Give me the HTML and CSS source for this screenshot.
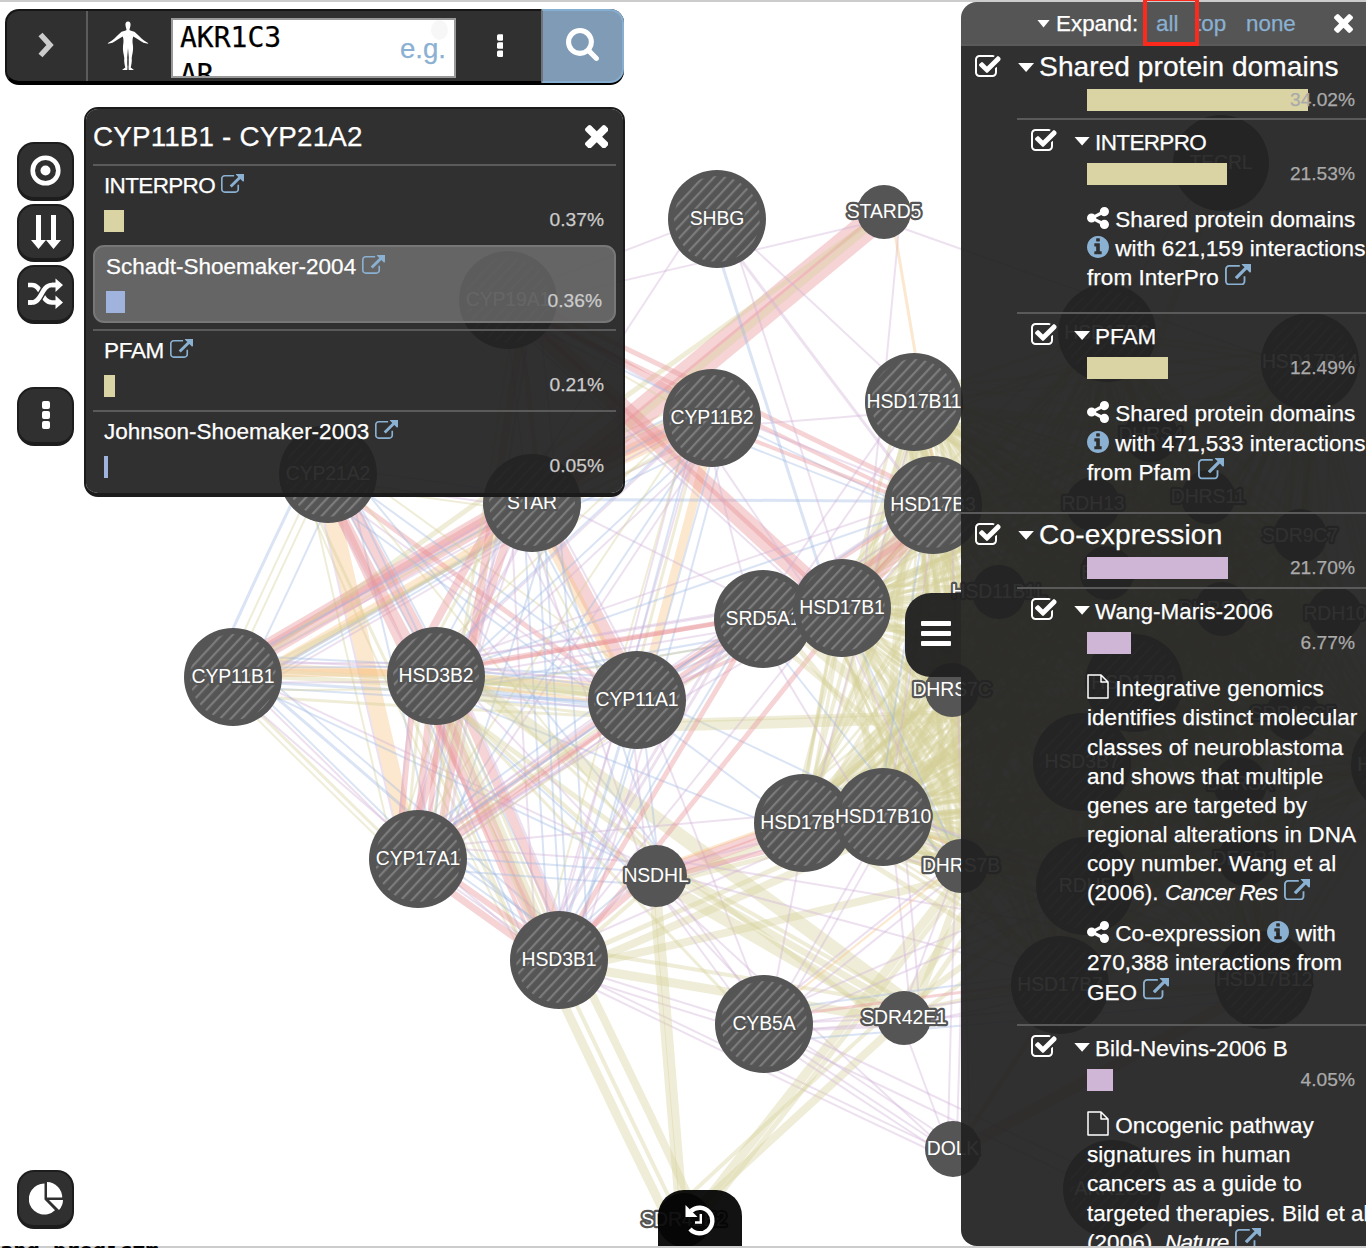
FILE: index.html
```html
<!DOCTYPE html>
<html lang="en">
<head>
<meta charset="utf-8">
<title>Gene network</title>
<link rel="stylesheet" href="styles.css">
</head>
<body>
<svg class="defs" width="0" height="0" aria-hidden="true">
  <symbol id="check" viewBox="64 128 1640 1408"><path d="M1472 930v318q0 119-84.500 203.500t-203.500 84.500h-832q-119 0-203.500-84.500t-84.500-203.500v-832q0-119 84.500-203.500t203.500-84.500h832q63 0 117 25 15 7 18 23 3 17-9 29l-49 49q-10 10-23 10-3 0-9-2-23-6-45-6h-832q-66 0-113 47t-47 113v832q0 66 47 113t113 47h832q66 0 113-47t47-113v-254q0-13 9-22l64-64q10-10 23-10 6 0 12 3 20 8 20 29zm231-489l-814 814q-24 24-57 24t-57-24l-430-430q-24-24-24-57t24-57l110-110q24-24 57-24t57 24l263 263 647-647q24-24 57-24t57 24l110 110q24 24 24 57t-24 57z"/></symbol>
  <symbol id="ext" viewBox="0 64 1792 1472"><path d="M1408 928v320q0 119-84.500 203.500t-203.500 84.500h-832q-119 0-203.500-84.500t-84.500-203.500v-832q0-119 84.500-203.500t203.500-84.500h704q14 0 23 9t9 23v64q0 14-9 23t-23 9h-704q-66 0-113 47t-47 113v832q0 66 47 113t113 47h832q66 0 113-47t47-113v-320q0-14 9-23t23-9h64q14 0 23 9t9 23zm384-864v512q0 26-19 45t-45 19-45-19l-176-176-652 652q-10 10-23 10t-23-10l-114-114q-10-10-10-23t10-23l652-652-176-176q-19-19-19-45t19-45 45-19h512q26 0 45 19t19 45z"/></symbol>
  <symbol id="times" viewBox="302 366 1188 1188"><path d="M1490 1322q0 40-28 68l-136 136q-28 28-68 28t-68-28l-294-294-294 294q-28 28-68 28t-68-28l-136-136q-28-28-28-68t28-68l294-294-294-294q-28-28-28-68t28-68l136-136q28-28 68-28t68 28l294 294 294-294q28-28 68-28t68 28l136 136q28 28 28 68t-28 68l-294 294 294 294q28 28 28 68z"/></symbol>
  <symbol id="search" viewBox="64 128 1664 1664"><path d="M1216 832q0-185-131.500-316.500t-316.500-131.500-316.500 131.500-131.500 316.500 131.500 316.500 316.500 131.500 316.500-131.500 131.500-316.500zm512 832q0 52-38 90t-90 38q-54 0-90-38l-343-342q-179 124-399 124-143 0-273.500-55.500t-225-150-150-225-55.500-273.500 55.500-273.500 150-225 225-150 273.500-55.500 273.500 55.500 225 150 150 225 55.500 273.500q0 220-124 399l343 343q37 37 37 90z"/></symbol>
  <symbol id="share" viewBox="128 128 1536 1536"><path d="M1344 1024q133 0 226.500 93.500t93.500 226.500-93.500 226.500-226.500 93.500-226.500-93.500-93.500-226.500q0-12 2-34l-360-180q-92 86-218 86-133 0-226.500-93.500t-93.500-226.500 93.500-226.500 226.500-93.500q126 0 218 86l360-180q-2-22-2-34 0-133 93.500-226.500t226.500-93.500 226.500 93.500 93.500 226.500-93.500 226.500-226.500 93.500q-126 0-218-86l-360 180q2 22 2 34t-2 34l360 180q92-86 218-86z"/></symbol>
  <symbol id="info" viewBox="128 128 1536 1536"><path d="M1152 1376v-160q0-14-9-23t-23-9h-96v-512q0-14-9-23t-23-9h-320q-14 0-23 9t-9 23v160q0 14 9 23t23 9h96v320h-96q-14 0-23 9t-9 23v160q0 14 9 23t23 9h448q14 0 23-9t9-23zm-128-896v-160q0-14-9-23t-23-9h-192q-14 0-23 9t-9 23v160q0 14 9 23t23 9h192q14 0 23-9t9-23zm640 416q0 209-103 385.500t-279.500 279.500-385.500 103-385.500-103-279.500-279.500-103-385.500 103-385.500 279.500-279.500 385.500-103 385.500 103 279.500 279.500 103 385.500z"/></symbol>
  <symbol id="file" viewBox="0 0 22 25"><path d="M1 1H14L21 8V24H1ZM14 1V8H21" fill="none" stroke="currentColor" stroke-width="1.500" stroke-linejoin="round"/></symbol>
  <symbol id="dots" viewBox="0 0 8 28"><rect width="8" height="8" rx="2"/><rect y="10" width="8" height="8" rx="2"/><rect y="20" width="8" height="8" rx="2"/></symbol>
</svg>

<main class="stage">
  <svg class="graph" id="graph" width="1366" height="1244" viewBox="0 2 1366 1244"></svg>

  <header class="query">
    <button class="q-toggle"><svg width="18" height="28" viewBox="0 0 18 28"><path d="M3.500 3.500 13 14 3.500 24.500" fill="none" stroke="#ccc" stroke-width="5.500"/></svg></button>
    <button class="q-species"><svg width="42" height="50" viewBox="0 0 42 50"><path d="M21 0.500C18.800.500 18.200 2.300 18.500 4.500 18.700 6.500 19.500 7.500 19.500 9 19 10 15.500 10 14 11.200 11 13.500 8.500 17 5 19.500L1 22 .800 22.800 3.200 22.300 5.500 21.800C9.500 19.500 13 17 15.800 15.500 16.800 18.500 16.600 21 16 25 15.500 30 17 34 17.300 37 16.800 40 17.700 44 18.300 46.500L15 49H20.300L20.500 46C19.900 42 20.500 39 20.200 36.500L21 27 21.800 36.500C21.500 39 22.100 42 21.500 46L21.700 49H27L23.700 46.500C24.300 44 25.200 40 24.700 37 25 34 26.500 30 26 25 25.400 21 25.200 18.500 26.200 15.500 29 17 32.500 19.500 36.500 21.800L38.800 22.300 41.200 22.800 41 22 37 19.500C33.500 17 31 13.500 28 11.200 26.500 10 23 10 22.500 9 22.500 7.500 23.300 6.500 23.500 4.500 23.800 2.300 23.200.500 21 .500Z" fill="#fff"/></svg></button>
    <div class="q-input"><pre>AKR1C3
AR</pre><span class="q-eg">e.g.</span><i class="q-dot"></i></div>
    <button class="q-more"><svg width="6.500" height="23"><use href="#dots"/></svg></button>
    <button class="q-search"><svg width="33" height="33"><use href="#search"/></svg></button>
  </header>

  <nav class="tools">
    <button><svg width="31" height="31" viewBox="0 0 31 31"><circle cx="15.500" cy="15.500" r="12.800" fill="none" stroke="#fff" stroke-width="4.600"/><circle cx="15.500" cy="15.500" r="5"/></svg></button>
    <button><svg width="30" height="34" viewBox="0 0 30 34"><path d="M5 0H10V25H15L7.500 34 0 25H5ZM20 0H25V25H30L22.500 34 15 25H20Z"/></svg></button>
    <button><svg width="35" height="31" viewBox="0 0 35 31"><path d="M0 7H4C14 7 13 24.500 24 24.500H29M0 24.500H4C14 24.500 13 7 24 7H29" fill="none" stroke="#fff" stroke-width="4.600"/><path d="M4 24.500C14 24.500 13 7 24 7" fill="none" stroke="#303030" stroke-width="7.500"/><path d="M0 24.500H4C14 24.500 13 7 24 7H29" fill="none" stroke="#fff" stroke-width="4.600"/><path d="M27.500.500 35 7 27.500 14ZM27.500 17.500 35 24.500 27.500 31Z"/></svg></button>
  </nav>
  <button class="tool tool-more"><svg width="8" height="28"><use href="#dots"/></svg></button>
  <button class="tool tool-pie"><svg width="34" height="33" viewBox="0 0 34 33"><path d="M15.500 1.500A15.500 15.500 0 1 0 26 28.200L15.500 17.500Z"/><path d="M18 0A15.500 15.500 0 0 1 33.200 15.500H18Z"/><path d="M20 18H34A15 15 0 0 1 30 28Z"/></svg></button>

  <section class="card">
    <div class="card-head"><h2>CYP11B1 - CYP21A2</h2><svg class="ic" width="23.500" height="23.500"><use href="#times"/></svg></div>
    <div class="net"><p class="caps">INTERPRO <svg class="link" width="23" height="19"><use href="#ext"/></svg></p><div class="meter"><i class="bar yellow" style="width:20px"></i><span>0.37%</span></div></div>
    <div class="net on"><p>Schadt-Shoemaker-2004 <svg class="link" width="23" height="19"><use href="#ext"/></svg></p><div class="meter"><i class="bar blue" style="width:19px"></i><span>0.36%</span></div></div>
    <div class="net"><p class="pfam">PFAM <svg class="link" width="23" height="19"><use href="#ext"/></svg></p><div class="meter"><i class="bar yellow" style="width:11px"></i><span>0.21%</span></div></div>
    <div class="net"><p>Johnson-Shoemaker-2003 <svg class="link" width="23" height="19"><use href="#ext"/></svg></p><div class="meter"><i class="bar blue" style="width:4px"></i><span>0.05%</span></div></div>
  </section>

  <button class="menu"><i></i><i></i><i></i></button>
  <button class="history"><svg width="30" height="32" viewBox="0 0 30 32"><path d="M6 7A12.800 12.800 0 1 1 5 25" fill="none" stroke="#fff" stroke-width="4.400"/><path d="M.500 1V13H12.500Z"/><path d="M15.800 10V18.500H10" fill="none" stroke="#fff" stroke-width="2.400"/></svg></button>

  <aside class="side">
    <div class="side-head"><i class="caret small"></i><span>Expand:</span><a class="all">all</a><a class="top">top</a><a class="none">none</a><svg class="ic" width="19" height="19"><use href="#times"/></svg></div>
    <section class="group">
      <div class="g-title"><svg class="ck" width="25.600" height="22"><use href="#check"/></svg><i class="caret"></i><h3>Shared protein domains</h3></div>
      <div class="meter"><i class="bar yellow wide" style="width:221px"></i><span>34.02%</span></div>
      <article class="sub">
        <div class="s-title"><svg class="ck" width="25.600" height="22"><use href="#check"/></svg><i class="caret"></i><h4 class="caps">INTERPRO</h4></div>
        <div class="meter"><i class="bar yellow" style="width:140px"></i><span>21.53%</span></div>
        <p><svg class="in" width="22" height="22"><use href="#share"/></svg> Shared protein domains<br><svg class="in bl" width="22" height="22"><use href="#info"/></svg> with 621,159 interactions<br>from InterPro <svg class="link" width="26" height="21.500"><use href="#ext"/></svg></p>
      </article>
      <article class="sub last">
        <div class="s-title"><svg class="ck" width="25.600" height="22"><use href="#check"/></svg><i class="caret"></i><h4>PFAM</h4></div>
        <div class="meter"><i class="bar yellow" style="width:81px"></i><span>12.49%</span></div>
        <p><svg class="in" width="22" height="22"><use href="#share"/></svg> Shared protein domains<br><svg class="in bl" width="22" height="22"><use href="#info"/></svg> with 471,533 interactions<br>from Pfam <svg class="link" width="26" height="21.500"><use href="#ext"/></svg></p>
      </article>
    </section>
    <section class="group second">
      <div class="g-title"><svg class="ck" width="25.600" height="22"><use href="#check"/></svg><i class="caret"></i><h3 class="coexp">Co-expression</h3></div>
      <div class="meter"><i class="bar purple" style="width:141px"></i><span>21.70%</span></div>
      <article class="sub long">
        <div class="s-title"><svg class="ck" width="25.600" height="22"><use href="#check"/></svg><i class="caret"></i><h4>Wang-Maris-2006</h4></div>
        <div class="meter"><i class="bar purple" style="width:44px"></i><span>6.77%</span></div>
        <p><svg class="in doc" width="22" height="25"><use href="#file"/></svg> Integrative genomics<br>identifies distinct molecular<br>classes of neuroblastoma<br>and shows that multiple<br>genes are targeted by<br>regional alterations in DNA<br>copy number. Wang et al<br>(2006). <em>Cancer Res</em> <svg class="link" width="26" height="21.500"><use href="#ext"/></svg></p>
        <p><svg class="in" width="22" height="22"><use href="#share"/></svg> Co-expression <svg class="in bl" width="22" height="22"><use href="#info"/></svg> with<br>270,388 interactions from<br>GEO <svg class="link" width="26" height="21.500"><use href="#ext"/></svg></p>
      </article>
      <article class="sub">
        <div class="s-title"><svg class="ck" width="25.600" height="22"><use href="#check"/></svg><i class="caret"></i><h4>Bild-Nevins-2006 B</h4></div>
        <div class="meter"><i class="bar purple" style="width:26px"></i><span>4.05%</span></div>
        <p><svg class="in doc" width="22" height="25"><use href="#file"/></svg> Oncogenic pathway<br>signatures in human<br>cancers as a guide to<br>targeted therapies. Bild et al<br>(2006). <em>Nature</em> <svg class="link" width="26" height="21.500"><use href="#ext"/></svg></p>
      </article>
    </section>
  </aside>
</main>
<i class="marker"></i>
<footer class="under">and predictm</footer>
<script src="graph.js"></script>
</body>
</html>
```
FILE: styles.css
```css
* { box-sizing: border-box; margin: 0; padding: 0; }
html, body { width: 1366px; height: 1248px; overflow: hidden; background: #fff; }
body { font-family: "Liberation Sans", Arial, sans-serif; color: #fff; -webkit-text-stroke: .25px; }
button { border: 0; color: #fff; font: inherit; display: flex; align-items: center; justify-content: center; }
svg { fill: currentColor; display: block; }
.defs { position: absolute; }
.stage { position: relative; height: 1246px; border-top: 2px solid #ccc; overflow: hidden; }
.graph { position: absolute; left: 0; top: 0; }
.graph text { font-size: 19.400px; fill: #fff; stroke: #555; stroke-width: 4.500px; paint-order: stroke; stroke-linejoin: round; text-anchor: middle; letter-spacing: -.1px; }

.query { position: absolute; left: 5px; top: 7px; width: 619px; height: 76px; display: flex; background: #303030; border-radius: 14px; border: 2px solid #161616; border-bottom: 4px solid #000; border-right: 0; }
.q-toggle { width: 81px; background: none; border-right: 2px solid #5c5c5c; }
.q-toggle svg { margin-bottom: 2px; margin-right: 2px; }
.q-species { width: 83px; background: none; padding-right: 4px; }
.q-input { position: relative; width: 285px; height: 60px; margin-top: 7px; background: #fff; border: 2px solid #999; overflow: hidden; padding: 0 7px; color: #000; }
.q-input pre { font: 28px/37px "DejaVu Sans Mono", monospace; margin-top: -1px; }
.q-eg { position: absolute; right: 8px; top: 13px; font-size: 27.600px; line-height: 32px; color: #8ab0d2; }
.q-dot { position: absolute; right: 6px; top: 0; width: 17px; height: 20px; border-radius: 50%; background: rgba(0,0,0,.03); }
.q-more { width: 85px; background: none; padding-bottom: 2px; padding-left: 3px; }
.q-search { flex: 1; height: 74px; margin-top: -2px; background: #7f9bb6; border: 2px solid #86aed1; border-left-color: #6f747a; border-radius: 0 14px 14px 0; padding-bottom: 3px; }

.tools { position: absolute; left: 17px; top: 140px; display: flex; flex-direction: column; gap: 3px; }
.tools button, .tool { width: 57px; height: 58.500px; border-radius: 17px; background: #303030; border: 2px solid #1d1d1d; border-bottom-width: 4px; }
.tool { position: absolute; left: 17px; }
.tool-more { top: 385px; }
.tool-pie { top: 1168px; }

.card { position: absolute; left: 84px; top: 105px; width: 541px; height: 390px; padding: 0 7px; background: rgba(32,32,32,.93); background-clip: padding-box; border: 2px solid #1b1b1b; border-bottom-width: 4px; border-radius: 14px; }
.card-head { display: flex; justify-content: space-between; align-items: center; height: 55px; padding-right: 8px; }
.card-head h2 { font-weight: 400; font-size: 27.800px; line-height: 56px; letter-spacing: .17px; }
.net { height: 81px; border-top: 2px solid #5a5a5a; padding: 6px 12px 0 11px; }
.net p { font-size: 22.500px; line-height: 28px; height: 38px; white-space: pre; }
.net.on { height: 78px; margin: 0 0 6px; border: 2px solid #777; border-radius: 11px; background: rgba(255,255,255,.26); }
.net span { color: #ccc; }
.caps { letter-spacing: -.65px; }
.pfam { letter-spacing: -.3px; }
.meter { display: flex; align-items: flex-start; justify-content: space-between; }
.meter span { font-size: 19.200px; line-height: 20px; }
.bar { display: block; height: 22px; flex: none; }
.yellow { background: #dad3a3; }
.blue { background: #a0b3dc; }
.purple { background: #d0b6d6; }
.link, .in { display: inline-block; color: #8ab0d2; }
.link { vertical-align: 0; }
.in { color: #fff; vertical-align: -2px; }
.doc { vertical-align: -3px; }
.bl { color: #8ab0d2; }

.menu { position: absolute; left: 905px; top: 591px; width: 56px; height: 84px; flex-direction: column; gap: 5px; padding-left: 5px; padding-bottom: 3px; border-radius: 26px 0 0 26px; background: rgba(32,32,32,.96); }
.menu i { width: 30px; height: 5px; border-radius: 1px; background: #fff; }
.history { position: absolute; left: 658px; top: 1188px; width: 84px; height: 56px; border-radius: 26px 26px 0 0; background: rgba(0,0,0,.93); padding-top: 4px; }

.side { position: absolute; left: 961px; top: 0; width: 405px; height: 1243.500px; overflow: hidden; border-radius: 16px 0 0 16px; background: rgba(32,32,32,.93); white-space: nowrap; }
.side-head { display: flex; align-items: center; height: 42px; background: rgba(255,255,255,.18); font-size: 22.400px; padding: 1px 0 0 76px; }
.side-head a { color: #8ab0d2; }
.side-head span { margin-left: 6px; width: 100px; }
.side-head .all { width: 39px; }
.side-head .top { width: 51px; }
.side-head .none { width: 88px; }
.caret { width: 16px; height: 9px; background: #fff; clip-path: polygon(0 0,100% 0,50% 100%); flex: none; }
.caret.small { width: 13px; height: 8px; }
.group { border-top: 2px solid #5a5a5a; }
.g-title { display: flex; height: 43px; padding: 9px 0 0 14px; align-items: flex-start; }
.g-title .caret { margin: 8px 5px 0 17.500px; }
h3 { font-weight: 400; font-size: 28.100px; line-height: 24px; letter-spacing: .05px; }
.coexp { letter-spacing: .17px; }
.side .meter { height: 28.500px; padding: 0 11px 0 126px; position: relative; }
.side .second > .meter { height: 30px; }
.side .meter span { position: relative; color: #aaa; line-height: 21px; }
/* The longest bar runs under its percentage. */
.side .wide { margin-right: -18px; }
.sub { margin-left: 56px; border-top: 2px solid #5a5a5a; padding-bottom: 19.500px; }
.side .sub .meter { padding-left: 70px; height: 42.500px; }
.s-title { display: flex; height: 43px; padding: 9px 0 0 14px; align-items: flex-start; }
.s-title .caret { margin: 8px 5px 0 17.500px; }
h4 { font-weight: 400; font-size: 22.500px; line-height: 28px; }
.sub p { padding-left: 70px; font-size: 22.500px; line-height: 29.120px; margin-bottom: 12px; letter-spacing: .05px; }
.sub p:last-child { margin-bottom: 0; }
.sub em { letter-spacing: -.65px; }
.sub.last { padding-bottom: 25px; }
.sub.long { padding-bottom: 17px; }
.marker { position: absolute; left: 1143px; top: 0; width: 56px; height: 46px; border: 4px solid #fb2a1c; border-top-width: 1.500px; }
.under { height: 2px; overflow: hidden; background: #ccc; color: #000; font: bold 22px/9px "DejaVu Sans Mono", monospace; }
```
FILE: graph.js
```js
const nodes = `SHBG 717 219 49
STARD5 884 212 27
CYP11B2 712 418 49
HSD17B11 914 402 49
HSD17B3 933 505 49
SRD5A1 763 619 49
HSD17B1 842 608 49
CYP11B1 233 677 49
HSD3B2 436 676 49
CYP11A1 637 700 49
CYP17A1 418 859 49
HSD3B1 559 960 49
HSD17B4 803 823 49
HSD17B10 883 817 49
NSDHL 656 876 31
CYB5A 764 1024 49
SDR42E1 904 1018 27
DOLK 953 1149 28
SDR42E2 684 1220 27
DHRS7C 952 690 27
DHRS7B 961 866 27
STAR 532 503 49
CYP21A2 328 474 49
CYP19A1 508 300 49
HSD11B1L 999 592 27
TECRL 1221 163 48
HSD17B6 1107 333 49
HSD17B14 1310 362 49
DHRS4 1151 435 27
RDH13 1093 504 27
DHRS11 1208 497 27
SDR9C7 1300 536 27
BDH1 1107 573 27
DHRS4L2 1222 609 27
RDH10 1335 614 27
HSD17B2 1134 683 49
SDR16C5 1293 714 27
HSD3B7 1082 762 49
DHRSX 1240 784 27
HSD17B8 1400 765 49
DECR1 1245 859 27
RDH5 1085 886 49
HSD17B7 1060 985 49
HSD17B12 1264 980 49
AKR1C3 1112 1189 49`.split("\n").map(l => l.split(" ")).map(([n, x, y, r]) => ({ n, x: +x, y: +y, r: +r }));

const byName = Object.fromEntries(nodes.map(n => [n.n, n]));
const colors = { y: "#d6cf98", p: "#e88e94", o: "#f7c081", b: "#9db8e2", v: "#cfb0d8" };

// Edges: from, to, then colour + width + "/" + bend for each parallel link.
const edges = `CYP21A2 CYP17A1 o17/6 y2/24 b2/-20 v2/16
STAR CYP11B1 p15/6 p11/12 o9/-12 y3/-14 y2/2 v2/-24 v2/8 b2/-20 b3/-16
STAR CYP11A1 p14/-4 o9/4 b2/12 v2/-14 y2/20 v2/30
CYP11B2 CYP11A1 o9/-4 y3/8 b2/14 b2/-20 v2/22
CYP11B2 STAR o16/4 p14/10 v2/-14 b2/-22 y3/18 b2/20 y2/26
STARD5 STAR p18/-5 p12/8 y7/-2
STARD5 CYP11B1 y5/0
CYP21A2 HSD3B2 p12/-6 p9/8 v2/14 b2/-14 b2/0
CYP21A2 HSD3B1 p9/8 b2/-14 y3/30 y2/44
CYP21A2 CYP11B1 b3/22 y2/10 y2/2 b2/-14
CYP21A2 CYP11A1 y2/-20 b2/-8 p5/6 v2/14 b2/22
CYP21A2 STAR v2/6 b2/-8 y2/10
CYP21A2 NSDHL y2/-10 b2/-20
CYP11B1 CYP11A1 o6/-14 y5/-3 b2/10 v2/-20 y3/20 b2/-24 b3/4 y4/-9
CYP11B1 HSD3B2 o8/-4 b2/-10 v2/6 y2/14 v2/-14
CYP11B1 CYP17A1 y3/8 y2/14 b2/-8 v2/-4
CYP11B1 HSD3B1 b3/-14 v2/10 b2/-24
CYP11B1 NSDHL v2/-6 b2/0
CYP11B1 CYP11B2 v2/-4 b2/-12 y3/8
STAR HSD3B2 b2/10 v3/-10 v2/-2 y3/20 p8/28
STAR CYP17A1 p8/14 b2/-26 v2/4 v2/20 y2/26
STAR HSD3B1 b2/-12 b2/10 v2/24
STAR HSD17B3 b3/-4
STAR SRD5A1 v2/-12
STAR NSDHL v2/10 b2/-10
CYP19A1 HSD17B1 p13/6 p11/-2 v2/16
CYP19A1 CYP11B2 p6/-4 y2/8 v2/0
CYP19A1 HSD17B3 p5/-8 p4/4 b2/14
CYP19A1 STAR b2/4 p5/-10
CYP19A1 CYP17A1 p8/-20 y3/-10 v3/-28
CYP19A1 SHBG v2/-4
CYP19A1 STARD5 v2/8
CYP19A1 HSD3B1 b2/-40
SHBG HSD17B1 b3/10 v2/-10
SHBG STAR v2/16
SHBG HSD17B11 v2/-4
SHBG HSD17B3 v3/6
STARD5 HSD17B1 v2/-20
STARD5 HSD17B14 v2/10
STARD5 HSD17B3 o3/-8
CYP11B2 HSD17B3 v2/-8 b2/14 p4/6
CYP11B2 HSD17B11 v2/10
CYP11B2 HSD17B1 v2/20
CYP11B2 HSD3B2 b2/-12 v2/-20 b2/10 v2/8 y2/18
CYP11B2 CYP17A1 y2/14 v2/-12 b2/-4
CYP11B2 HSD3B1 b2/-12 v2/10 y2/22
CYP11B2 SRD5A1 v2/10
HSD3B2 HSD17B1 p5/-6 v2/-14 v2/4 b2/18
HSD3B2 SRD5A1 p4/-4 b2/14 v2/-14 y2/20
HSD3B2 CYP11A1 y10/-3 o3/6 y4/0 b4/10 b2/-10 v2/-14 v2/14 y3/20
HSD3B2 CYP17A1 p6/4 p5/-8 p6/22 b2/-14 y3/14 y3/-22 v2/0 v2/24
HSD3B2 HSD3B1 p9/-14 p7/6 p4/18 y8/2 y4/10 y3/-6 b2/26 v3/-20 y3/30
HSD3B2 NSDHL b2/14 y3/-24 y4/10
HSD3B2 HSD17B4 b2/14
HSD3B2 SDR42E1 y14/-16 y5/16
HSD3B2 HSD17B3 v2/-10 b2/0
HSD3B2 CYB5A v2/-14 y3/8
CYP11A1 HSD17B10 b2/-8
CYP11A1 HSD17B4 b2/6
CYP11A1 HSD17B2 y10/30 y4/24
CYP11A1 SRD5A1 p4/-4 b2/6 v2/12
CYP11A1 HSD17B1 p4/2 b2/-10 v2/-16
CYP11A1 CYP17A1 p5/6 p4/-6 v2/12 y3/0 v2/-12 b2/20
CYP11A1 HSD3B1 b2/-12 b3/4 v2/14 v2/-20
CYP11A1 NSDHL v2/8 b2/-4
CYP11A1 HSD17B3 v2/8 p4/-6
CYP11A1 CYB5A v2/-6
CYP17A1 HSD3B1 p7/8 p6/-5 b2/-12 v2/2 b2/-20
CYP17A1 SRD5A1 p5/0 v2/-14 b2/-8 y2/10
CYP17A1 HSD17B1 v2/-4
CYP17A1 NSDHL b2/-4 v2/-14 b2/10
CYP17A1 HSD17B3 b2/-10 v2/6
CYP17A1 HSD17B10 v2/-12
HSD3B1 SRD5A1 p5/-4 b2/-10 v3/-20 v3/-26
HSD3B1 HSD17B1 p5/6 v2/-8
HSD3B1 STAR b2/4
HSD3B1 NSDHL y4/4 p6/-4 v2/-8 b2/-12
HSD3B1 HSD17B10 y8/16 y5/4 v2/-10
HSD3B1 SDR42E2 y9/16 y4/4 y8/-16
HSD3B1 SDR42E1 y9/4 y4/-14
HSD3B1 CYB5A v2/4 v2/12
HSD3B1 DOLK v2/6 v2/12
HSD3B1 DHRS7B y8/12
NSDHL SDR42E2 y8/0 y5/6
NSDHL SDR42E1 y12/4 y7/-8 y4/-16
NSDHL HSD17B4 p8/2 p7/-4 o3/-8 y5/8 v2/12
NSDHL HSD17B10 p5/4 y5/10 v2/-6
NSDHL CYB5A v2/8 v2/-6
NSDHL DOLK v2/6
NSDHL HSD17B7 v2/-6
NSDHL HSD17B12 v2/-20
SDR42E1 SDR42E2 y8/0 y4/16
SDR42E2 DHRS7B y9/6 y5/14
SDR42E1 RDH5 y6/-8 y4/6
SDR42E1 HSD3B7 y10/-10 y5/4
SDR42E1 HSD17B7 v2/8 y4/-6
SDR42E1 DOLK v2/4
SDR42E1 CYB5A v3/-8 v2/0
SDR42E1 HSD17B10 v2/8 v2/20
SDR42E1 DHRS7B y7/8 v2/-4
CYB5A DHRS7B o2/-4 v2/4 v2/-8
CYB5A HSD17B7 p3/-6 b2/-14 v2/4
CYB5A HSD17B10 v2/4 v2/12
CYB5A HSD17B4 v2/4
CYB5A RDH5 v2/-8 v2/8
CYB5A DOLK v2/4 v2/-6 v2/10
CYB5A AKR1C3 v2/-8 v2/6
CYB5A HSD17B12 v2/10 b2/20
DOLK DHRS7B v2/4 v2/-6
DOLK HSD17B7 p5/4
DOLK HSD17B12 p12/4
DOLK HSD17B3 v2/20
HSD17B1 SRD5A1 p8/6
HSD17B1 HSD17B3 p12/-4 p10/6 y16/-8 v2/14
SRD5A1 HSD17B3 p6/14 v2/-10
SRD5A1 HSD17B11 v2/-8 v2/10
SRD5A1 HSD17B10 v2/12
SRD5A1 RDH5 y10/-12 y5/10
SRD5A1 DHRS7B b2/10 y5/-10
HSD17B1 DHRS7B v2/8 b2/0 y5/4
HSD17B10 HSD17B12 y4/-4 b2/-12 v2/8
HSD17B4 DHRS7B v2/8 y6/4
HSD17B4 HSD17B11 v2/6
HSD17B10 HSD17B3 b2/-6 v2/4
HSD17B10 RDH5 o2/4 v2/-8
TECRL HSD17B6 v2/6
TECRL RDH13 y8/-4`;

const ns = "http://www.w3.org/2000/svg";
const svg = document.getElementById("graph");
const add = (tag, attrs, text) => {
  const e = document.createElementNS(ns, tag);
  for (const k in attrs) e.setAttribute(k, attrs[k]);
  if (text) e.textContent = text;
  return svg.appendChild(e);
};

const link = (a, b, color, width, bend) => {
  const dx = b.x - a.x, dy = b.y - a.y, len = Math.hypot(dx, dy);
  const ux = -dy / len, uy = dx / len;
  // Parallel links fan out to the sides of the nodes, but never past their rims.
  const end = n => Math.max(-n.r * .6, Math.min(n.r * .6, bend * .9));
  const ea = end(a), eb = end(b);
  add("path", {
    d: `M${a.x + ux * ea} ${a.y + uy * ea}Q${(a.x + b.x) / 2 + ux * bend} ${(a.y + b.y) / 2 + uy * bend} ${b.x + ux * eb} ${b.y + uy * eb}`,
    fill: "none", stroke: colors[color], "stroke-width": width, "stroke-opacity": 0.38
  });
};

svg.innerHTML = '<defs><pattern id="hatch" width="8" height="8" patternUnits="userSpaceOnUse" patternTransform="rotate(43)"><rect x="2" width="2.2" height="8" fill="#7c7c7c"/></pattern></defs>';

// Members of the same enzyme family share domains with one another.
const family = "HSD17B11 HSD17B3 HSD17B1 HSD17B10 HSD17B4 DHRS7C DHRS7B HSD11B1L HSD17B6 HSD17B14 DHRS4 RDH13 DHRS11 SDR9C7 BDH1 DHRS4L2 RDH10 HSD17B2 SDR16C5 DHRSX HSD17B8 DECR1 RDH5 HSD17B7 HSD17B12".split(" ");
family.forEach((a, i) => family.slice(i + 1).forEach((b, j) => {
  link(byName[a], byName[b], "y", 3 + (i * 7 + j * 3) % 4, (i * 5 + j * 3) % 17 - 8);
  link(byName[a], byName[b], "y", 3.5, (i * 3 + j * 11) % 41 - 20);
  link(byName[a], byName[b], "y", 2.6, (i * 13 + j * 7) % 57 - 28);
}));

edges.split("\n").forEach(row => {
  const [a, b, ...links] = row.split(" ");
  links.forEach(l => {
    const [w, bend] = l.slice(1).split("/");
    link(byName[a], byName[b], l[0], +w, +bend);
  });
});

nodes.forEach(({ n, x, y, r }) => {
  add("circle", { cx: x, cy: y, r, fill: "#555" });
  if (r === 49) add("circle", { cx: x, cy: y, r: 43, fill: "url(#hatch)" });
  add("text", { x, y: y + 6 }, n);
});
```
